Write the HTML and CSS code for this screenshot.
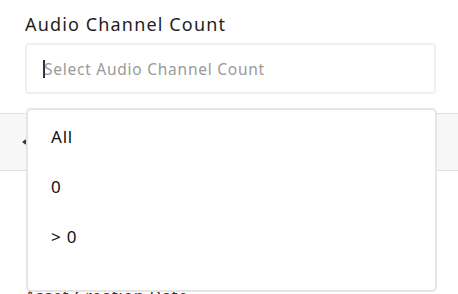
FILE: index.html
```html
<!DOCTYPE html>
<html lang="en">
<head>
  <meta charset="UTF-8" />
  <meta name="viewport" content="width=device-width, initial-scale=1.0" />
  <title>Filters</title>
  <link rel="stylesheet" href="styles.css">
</head>
<body>
  <div class="filter-panel">
    <div class="field">
      <div class="field-label">Audio Channel Count</div>
      <div class="select-box">
        <span class="caret"></span>
        <span class="placeholder">Select Audio Channel Count</span>
      </div>
    </div>

    <div class="toolbar">
      <svg class="back-icon" width="10" height="8" viewBox="0 0 10 8">
        <path d="M0 4 L5 0.5 L5 7.5 Z" fill="#333" />
      </svg>
    </div>

    <div class="field next">
      <div class="field-label small">Asset Creation Date</div>
    </div>

    <ul class="dropdown">
      <li class="dropdown-item">All</li>
      <li class="dropdown-item">0</li>
      <li class="dropdown-item">&gt; 0</li>
    </ul>
  </div>
</body>
</html>
```

FILE: styles.css
```css
html, body {
  margin: 0;
  padding: 0;
  background: #fff;
  font-family: 'Noto Sans', sans-serif;
  color: #1a1a1a;
  overflow: hidden;
}

.filter-panel {
  position: relative;
  width: 458px;
  height: 294px;
  overflow: hidden;
}

.field {
  padding: 11px 22px 0 25px;
}

.field-label {
  font-size: 18px;
  line-height: 26px;
  letter-spacing: 1.15px;
  color: #1f1f1f;
  margin-bottom: 6px;
}

.select-box {
  display: flex;
  align-items: center;
  height: 47px;
  padding-left: 16px;
  border: 2px solid #f0f0f0;
  border-radius: 4px;
}

.caret {
  width: 2px;
  height: 18px;
  background: #333;
  margin-right: -1px;
}

.placeholder {
  font-size: 15.5px;
  letter-spacing: 0.75px;
  color: #9a9a9a;
}

.toolbar {
  margin-top: 19px;
  height: 56px;
  background: #f7f7f7;
  border-top: 1px solid #e2e2e2;
  border-bottom: 1px solid #e2e2e2;
  display: flex;
  align-items: center;
  padding-left: 22px;
}

.field.next {
  padding-top: 112px;
}

.field-label.small {
  font-size: 16px;
  letter-spacing: 0.8px;
  color: #333;
}

.dropdown {
  position: absolute;
  top: 108px;
  left: 26px;
  width: 407px;
  height: 178px;
  margin: 0;
  padding: 2px 0 0 0;
  list-style: none;
  background: #fff;
  border: 2px solid #e8e5e5;
  border-radius: 5px;
  box-sizing: content-box;
}

.dropdown-item {
  height: 50px;
  line-height: 50px;
  padding-left: 23px;
  font-size: 17px;
  letter-spacing: 0.8px;
  color: #111;
}
```
